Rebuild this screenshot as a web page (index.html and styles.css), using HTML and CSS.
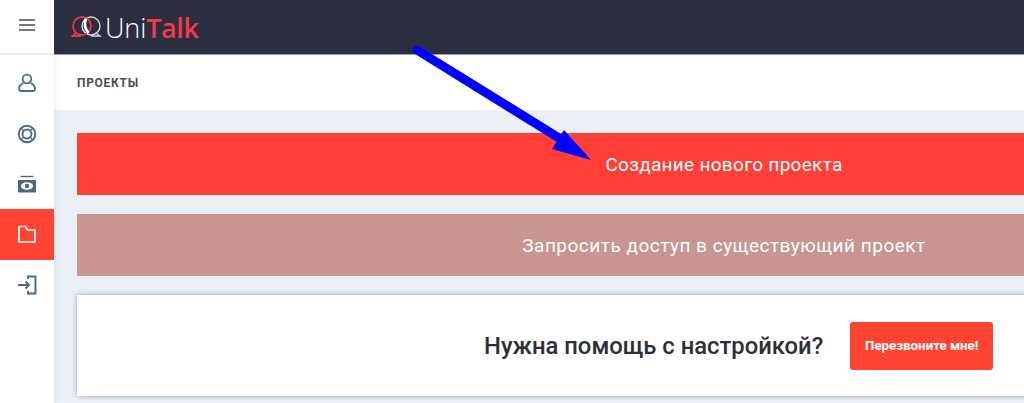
FILE: index.html
```html
<!DOCTYPE html>
<html lang="ru">
<head>
<meta charset="utf-8">
<title>UniTalk</title>
<link rel="stylesheet" href="styles.css">
</head>
<body>
<div class="app">
  <aside class="side">
    <div class="burger">
      <svg width="18" height="14" viewBox="0 0 18 14"><path d="M1 2h16M1 7h16M1 12h16" stroke="#74787c" stroke-width="1.8" fill="none"/></svg>
    </div>
    <nav class="nav">
      <a class="nav-item"><svg width="20" height="20" viewBox="0 0 20 20" fill="none" stroke="#4f6a80" stroke-width="1.8"><circle cx="10" cy="6" r="4.300"/><path d="M6.500 10C3.500 11.500 2 13.500 2 15.500c0 1.700.8 2.500 2 2.500h12c1.200 0 2-.8 2-2.500 0-2-1.500-4-4.500-5.500"/></svg></a>
      <a class="nav-item"><svg width="20" height="20" viewBox="0 0 20 20" fill="none" stroke="#4f6a80" stroke-width="1.900"><circle cx="10" cy="10" r="8.300"/><circle cx="10" cy="10" r="4.500"/><path d="M4.500 4.500l2.500 2.500M15.500 4.500 13 7M4.500 15.500 7 13M15.500 15.500 13 13" stroke-width="1.400"/></svg></a>
      <a class="nav-item"><svg width="20" height="20" viewBox="0 0 20 20"><path d="M3.500 2.500h13" stroke="#4f6a80" stroke-width="1.400"/><path d="M1 6h18v12.500H1z" fill="#4f6a80"/><ellipse cx="10" cy="12" rx="6" ry="3.800" fill="#fff"/><circle cx="10" cy="12" r="2.200" fill="#4f6a80"/></svg></a>
      <a class="nav-item active"><svg width="20" height="20" viewBox="0 0 20 20" fill="none" stroke="#fff" stroke-width="1.700" stroke-linejoin="round"><path d="M2 2.500h6.500l2 3.500H18v12H2z"/></svg></a>
      <a class="nav-item"><svg width="20" height="20" viewBox="0 0 20 20" fill="none" stroke="#4f6a80" stroke-width="1.900"><path d="M11 4V1.500h7.500v17H11V16"/><path d="M1 10h11M8.500 6.500 12 10l-3.500 3.500"/></svg></a>
    </nav>
  </aside>
  <div class="content">
    <header class="top">
      <svg class="logo-mark" width="32" height="24" viewBox="0 0 32 24" fill="none"><circle cx="20" cy="11" r="9" stroke="#d8d8dd" stroke-width="1.400"/><path d="M25 18l4 3h-9" stroke="#d8d8dd" stroke-width="1.400"/><circle cx="11" cy="11" r="9" stroke="#f0344a" stroke-width="1.800"/><path d="M5 18l-3.500 3H10" stroke="#f0344a" stroke-width="1.800"/><path d="M15 3.500c-2 5-1.500 10 2.500 14.500" stroke="#fff" stroke-width="2.800"/></svg>
      <span class="logo-text">Uni<span class="logo-accent">Talk</span></span>
    </header>
    <div class="crumb">ПРОЕКТЫ</div>
    <main class="main">
      <a class="bar bar-primary">Создание нового проекта</a>
      <a class="bar bar-muted">Запросить доступ в существующий проект</a>
      <section class="help">
        <h2 class="help-title">Нужна помощь с настройкой?</h2>
        <a class="help-btn">Перезвоните мне!</a>
      </section>
    </main>
  </div>
</div>
<svg class="arrow" width="200" height="130" viewBox="0 0 200 130"><path d="M5 10 L160 106" stroke="#0000ff" stroke-width="9" stroke-linecap="round"/><path d="M152 90 L179 120 L140 109z" fill="#0000ff"/></svg>
</body>
</html>
```
FILE: styles.css
```css
* { box-sizing: border-box; }
html, body { margin: 0; height: 100%; overflow: hidden; }
body { font-family: Roboto, "Liberation Sans", sans-serif; background: #eaf0f5; }
.app { display: flex; width: 1024px; height: 403px; overflow: hidden; }
.side { width: 54px; flex: none; background: #fff; box-shadow: 2px 0 6px rgba(60,70,90,.08); position: relative; z-index: 1; }
.burger { height: 55px; display: flex; align-items: center; justify-content: center; padding-bottom: 3px; border-bottom: 2px solid #e9eef3; margin-bottom: 3px; }
.nav { display: flex; flex-direction: column; }
.nav-item { height: 50.4px; display: flex; align-items: center; justify-content: center; }
.active { background: #ff4433; }
.content { flex: 1; min-width: 0; }
.top { height: 55px; background: #2b2e3f; border-bottom: 1px solid #9a9ca6; display: flex; align-items: center; padding-left: 17px; }
.logo-mark { flex: none; margin-right: 2px; }
.logo-text { font-family: "Open Sans", Lato, sans-serif; font-size: 27px; color: #fff; font-weight: 300; letter-spacing: -.1px; }
.logo-accent { color: #f5364c; font-weight: 600; letter-spacing: -.4px; }
.crumb { height: 55px; background: #fff; display: flex; align-items: center; padding-left: 23px; font-size: 12px; font-weight: 700; color: #4a4f57; letter-spacing: .7px; }
.main { width: 1341px; padding: 23px 24px 0 23px; display: flex; flex-direction: column; gap: 19px; }
.bar { height: 62px; display: flex; align-items: center; justify-content: center; color: #fff; font-size: 19px; letter-spacing: .3px; }
.bar-primary { background: #ff3f38; }
.bar-muted { background: #c89590; letter-spacing: .5px; }
.help { height: 101px; background: #fff; box-shadow: 0 0 5px rgba(60,70,80,.45); display: flex; align-items: center; padding-left: 407px; }
.help-title { margin: 0 27px 0 0; font-size: 23.800px; font-weight: 500; color: #2c3036; }
.help-btn { width: 143px; height: 48px; background: #ff4433; border-radius: 3px; color: #fff; font-size: 13.300px; font-weight: 700; display: flex; align-items: center; justify-content: center; }
.arrow { position: absolute; left: 412px; top: 40px; }
```
